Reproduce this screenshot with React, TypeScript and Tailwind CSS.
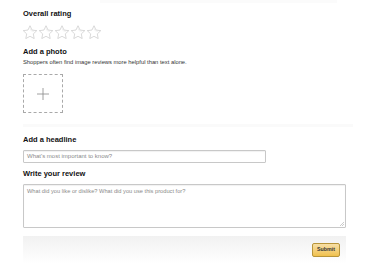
import React from 'react';

function Star() {
  return (
    <svg width="16" height="14" viewBox="0 0 32 28" fill="none">
      <path
        d="M16 1.5l4.1 8.6 9.4 1.2-6.9 6.5 1.8 9.3L16 22.6l-8.4 4.5 1.8-9.3-6.9-6.5 9.4-1.2z"
        stroke="#c4c4c4"
        strokeWidth="1.3"
        strokeLinejoin="round"
      />
      <path d="M16 6.5l2.6 5.4 5.8.8" stroke="#e2e2e2" strokeWidth="1" />
    </svg>
  );
}

export default function App() {
  return (
    <div
      className="w-[374px] h-[276px] bg-white overflow-hidden text-[#111]"
      style={{ fontFamily: '"Liberation Sans", Arial, sans-serif' }}
    >
      <div className="ml-[100px] w-[237px] h-[3px] bg-[#fbfbfb]" />

      <div className="px-[23px]">
        <div className="mt-[6px] text-[7.5px] leading-[10px] font-bold">Overall rating</div>
        <div className="mt-[6px] flex h-[14px] -ml-px">
          <Star />
          <Star />
          <Star />
          <Star />
          <Star />
        </div>

        <div className="mt-[8px] text-[7.5px] leading-[10px] font-bold">Add a photo</div>
        <div className="mt-[2px] text-[5.8px] leading-[7px] text-[#333]">
          Shoppers often find image reviews more helpful than text alone.
        </div>
        <div className="mt-[8px] w-[40px] h-[39px] border border-dashed border-[#a9a9a9] flex items-center justify-center">
          <svg width="12" height="12" viewBox="0 0 12 12">
            <path d="M6 0v12M0 6h12" stroke="#888" strokeWidth="0.8" />
          </svg>
        </div>
      </div>

      <div className="mt-[11px] ml-[23px] w-[330px] h-[3px] bg-[#fafafa]" />

      <div className="px-[23px]">
        <div className="mt-[8px] text-[7.5px] leading-[10px] font-bold">Add a headline</div>
        <div className="mt-[5px] w-[243px] h-[13px] border border-[#c8c8c8] rounded-[1px] flex items-center px-[3px] text-[6px] text-[#8a8a8a] shadow-[inset_0_1px_1px_rgba(0,0,0,0.06)]">
          What&apos;s most important to know?
        </div>

        <div className="mt-[6px] text-[7.5px] leading-[10px] font-bold">Write your review</div>
        <div className="mt-[5px] relative w-[323px] h-[44px] border border-[#c8c8c8] rounded-[1px] px-[3px] pt-[3px] text-[5.7px] leading-[7px] text-[#8a8a8a] shadow-[inset_0_1px_1px_rgba(0,0,0,0.06)]">
          What did you like or dislike? What did you use this product for?
          <svg className="absolute right-[1px] bottom-[1px]" width="4" height="4" viewBox="0 0 4 4">
            <path d="M4 0L0 4M4 2L2 4" stroke="#aaa" strokeWidth="0.6" />
          </svg>
        </div>

        <div className="mt-[8px] w-[323px] h-[28px] bg-gradient-to-b from-[#f1f1f1] to-white flex justify-end items-start pt-[7px] pr-[6px]">
          <div className="w-[28px] h-[14px] rounded-[2px] border border-[#b8953a] bg-gradient-to-b from-[#f7dfa5] to-[#f0c14b] flex items-center justify-center text-[5.3px] font-bold text-[#333]">
            Submit
          </div>
        </div>
      </div>
    </div>
  );
}
